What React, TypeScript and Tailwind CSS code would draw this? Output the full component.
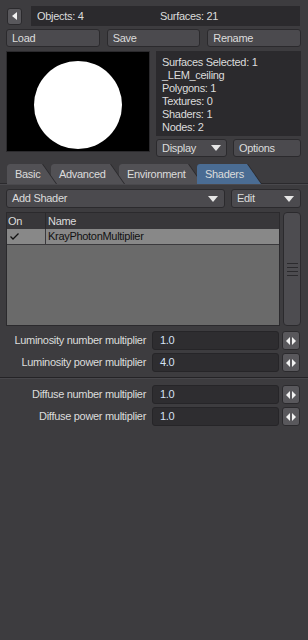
import React from "react";

const btn =
  "h-[18px] rounded-[3px] border border-[#2b2a2d] bg-[#4b4a4e] text-[#dcdcdc] px-[5px] flex items-center leading-none";

const infoLines = [
  "Surfaces Selected: 1",
  "_LEM_ceiling",
  "Polygons: 1",
  "Textures: 0",
  "Shaders: 1",
  "Nodes: 2",
];

const tabs = [
  { name: "Basic", w: "w-[50px]", z: "z-[4]" },
  { name: "Advanced", w: "w-[74px]", z: "z-[3]" },
  { name: "Environment", w: "w-[84px]", z: "z-[2]" },
  { name: "Shaders", w: "w-[65px]", z: "z-[5]" },
];

const fields = [
  [
    { label: "Luminosity number multiplier", value: "1.0" },
    { label: "Luminosity power multiplier", value: "4.0" },
  ],
  [
    { label: "Diffuse number multiplier", value: "1.0" },
    { label: "Diffuse power multiplier", value: "1.0" },
  ],
];

function Caret() {
  return (
    <svg width="10" height="6" viewBox="0 0 10 6">
      <path d="M0 0h10L5 6z" fill="#e6e6e6" />
    </svg>
  );
}

function Field({ label, value }: { label: string; value: string }) {
  return (
    <div className="flex items-center h-[19px]">
      <div className="w-[147px] text-right text-[#dcdcdc] pr-[1px]">{label}</div>
      <div className="ml-[5px] w-[127px] h-[19px] rounded-[3px] bg-[#2e2d30] border border-[#262528] text-[#d6e2f5] pl-[7px] flex items-center">
        {value}
      </div>
      <div className="ml-[3px] w-[18px] h-[19px] rounded-[3px] bg-[#59585c] border border-[#2b2a2d] flex items-center justify-center">
        <svg width="10" height="8" viewBox="0 0 10 8">
          <path d="M4 0v8L0 4z M6 0v8l4-4z" fill="#f2f2f2" />
        </svg>
      </div>
    </div>
  );
}

export default function App() {
  return (
    <div
      className="w-[308px] h-[640px] bg-[#3d3c3f] text-[11px] tracking-[-0.3px] overflow-hidden"
      style={{ fontFamily: '"Liberation Sans", Arial, sans-serif' }}
    >
      {/* top info */}
      <div className="flex items-center pl-[7px] pr-[8px] pt-[6px]">
        <div className="w-[15px] h-[17px] rounded-[3px] bg-[#59585c] border border-[#2b2a2d] flex items-center justify-center">
          <svg width="5" height="8" viewBox="0 0 5 8">
            <path d="M5 0v8L0 4z" fill="#f2f2f2" />
          </svg>
        </div>
        <div className="ml-[9px] flex-1 h-[20px] bg-[#2b2a2d] flex items-center text-[#dcdcdc] pl-[6px]">
          <span className="w-[123px]">Objects: 4</span>
          <span>Surfaces: 21</span>
        </div>
      </div>

      <div className="flex gap-[7px] px-[6px] pr-[7px] mt-[3px]">
        <div className={`${btn} flex-1`}>Load</div>
        <div className={`${btn} flex-1`}>Save</div>
        <div className={`${btn} flex-1`}>Rename</div>
      </div>

      {/* preview + info */}
      <div className="flex px-[6px] pr-[7px] mt-[4px]">
        <div className="w-[144px] h-[101px] bg-black border border-[#2b2a2d] flex items-center justify-center pt-[6px]">
          <div className="w-[88px] h-[88px] rounded-full bg-white" />
        </div>
        <div className="ml-[6px] flex-1 flex flex-col">
          <div className="h-[85px] bg-[#2b2a2d] text-[#dcdcdc] pl-[6px] pt-[5px] leading-[13px]">
            {infoLines.map((l) => (
              <div key={l}>{l}</div>
            ))}
          </div>
          <div className="flex gap-[6px] mt-[3px]">
            <div className={`${btn} w-[71px] justify-between pr-[5px]`}>
              <span>Display</span>
              <Caret />
            </div>
            <div className={`${btn} flex-1`}>Options</div>
          </div>
        </div>
      </div>

      {/* tabs */}
      <div className="flex pl-[7px] mt-[7px] h-[20px] border-b border-[#2b2a2d]">
        {tabs.map((t, i) => (
          <div
            key={t.name}
            className={`${t.w} ${t.z} ${i > 0 ? "-ml-[6px]" : ""} relative h-[20px] bg-[#2b2a2d] [clip-path:polygon(0_0,calc(100%-14px)_0,100%_100%,0_100%)] rounded-tl-[3px]`}
          >
            <div
              className={`h-full mr-[1px] flex items-center pl-[8px] text-[#dcdcdc] rounded-tl-[3px] ${
                t.name === "Shaders" ? "bg-[#4a6c93]" : "bg-[#525155]"
              } [clip-path:polygon(0_0,calc(100%-14px)_0,100%_100%,0_100%)]`}
            >
              {t.name}
            </div>
          </div>
        ))}
      </div>
      <div className="h-px bg-[#4a494d]" />

      {/* add shader */}
      <div className="flex gap-[6px] px-[6px] pr-[7px] mt-[4px]">
        <div className={`${btn} flex-1 justify-between pr-[6px] h-[19px]`}>
          <span>Add Shader</span>
          <Caret />
        </div>
        <div className={`${btn} w-[70px] justify-between pr-[6px] h-[19px]`}>
          <span>Edit</span>
          <Caret />
        </div>
      </div>

      {/* list */}
      <div className="flex px-[6px] pr-[7px] mt-[4px]">
        <div className="w-[274px] h-[114px] bg-[#6a6a6a] border border-[#2b2a2d]">
          <div className="flex h-[16px] bg-[#38373a] text-[#dcdcdc] items-center">
            <div className="w-[39px] pl-[1px] border-r border-[#2b2a2d] h-full flex items-center">On</div>
            <div className="pl-[2px]">Name</div>
          </div>
          <div className="flex h-[16px] bg-[#888888] border-b border-[#3a393c] text-[#111] items-center">
            <div className="w-[39px] pl-[3px] border-r border-[#3a393c] h-full flex items-center">
              <svg width="9" height="7" viewBox="0 0 9 7">
                <path d="M0.5 3.5L3 6L8.5 0.5" stroke="#111" strokeWidth="1.3" fill="none" />
              </svg>
            </div>
            <div className="pl-[2px]">KrayPhotonMultiplier</div>
          </div>
        </div>
        <div className="ml-[3px] flex-1 h-[114px] rounded-[4px] bg-[#4d4c50] border border-[#2b2a2d] flex flex-col items-center justify-center gap-[3px]">
          {[0, 1, 2, 3].map((i) => (
            <div key={i} className="w-[11px] h-px bg-[#a0a0a0] border-b border-[#2b2a2d]" />
          ))}
        </div>
      </div>

      {/* fields */}
      <div className="mt-[5px] flex flex-col gap-[3px] pr-[8px]">
        {fields[0].map((f) => (
          <Field key={f.label} {...f} />
        ))}
      </div>
      <div className="mt-[5px] h-[2px] border-t border-[#242326] bg-[#48474b]" />
      <div className="mt-[6px] flex flex-col gap-[3px] pr-[8px]">
        {fields[1].map((f) => (
          <Field key={f.label} {...f} />
        ))}
      </div>
    </div>
  );
}
